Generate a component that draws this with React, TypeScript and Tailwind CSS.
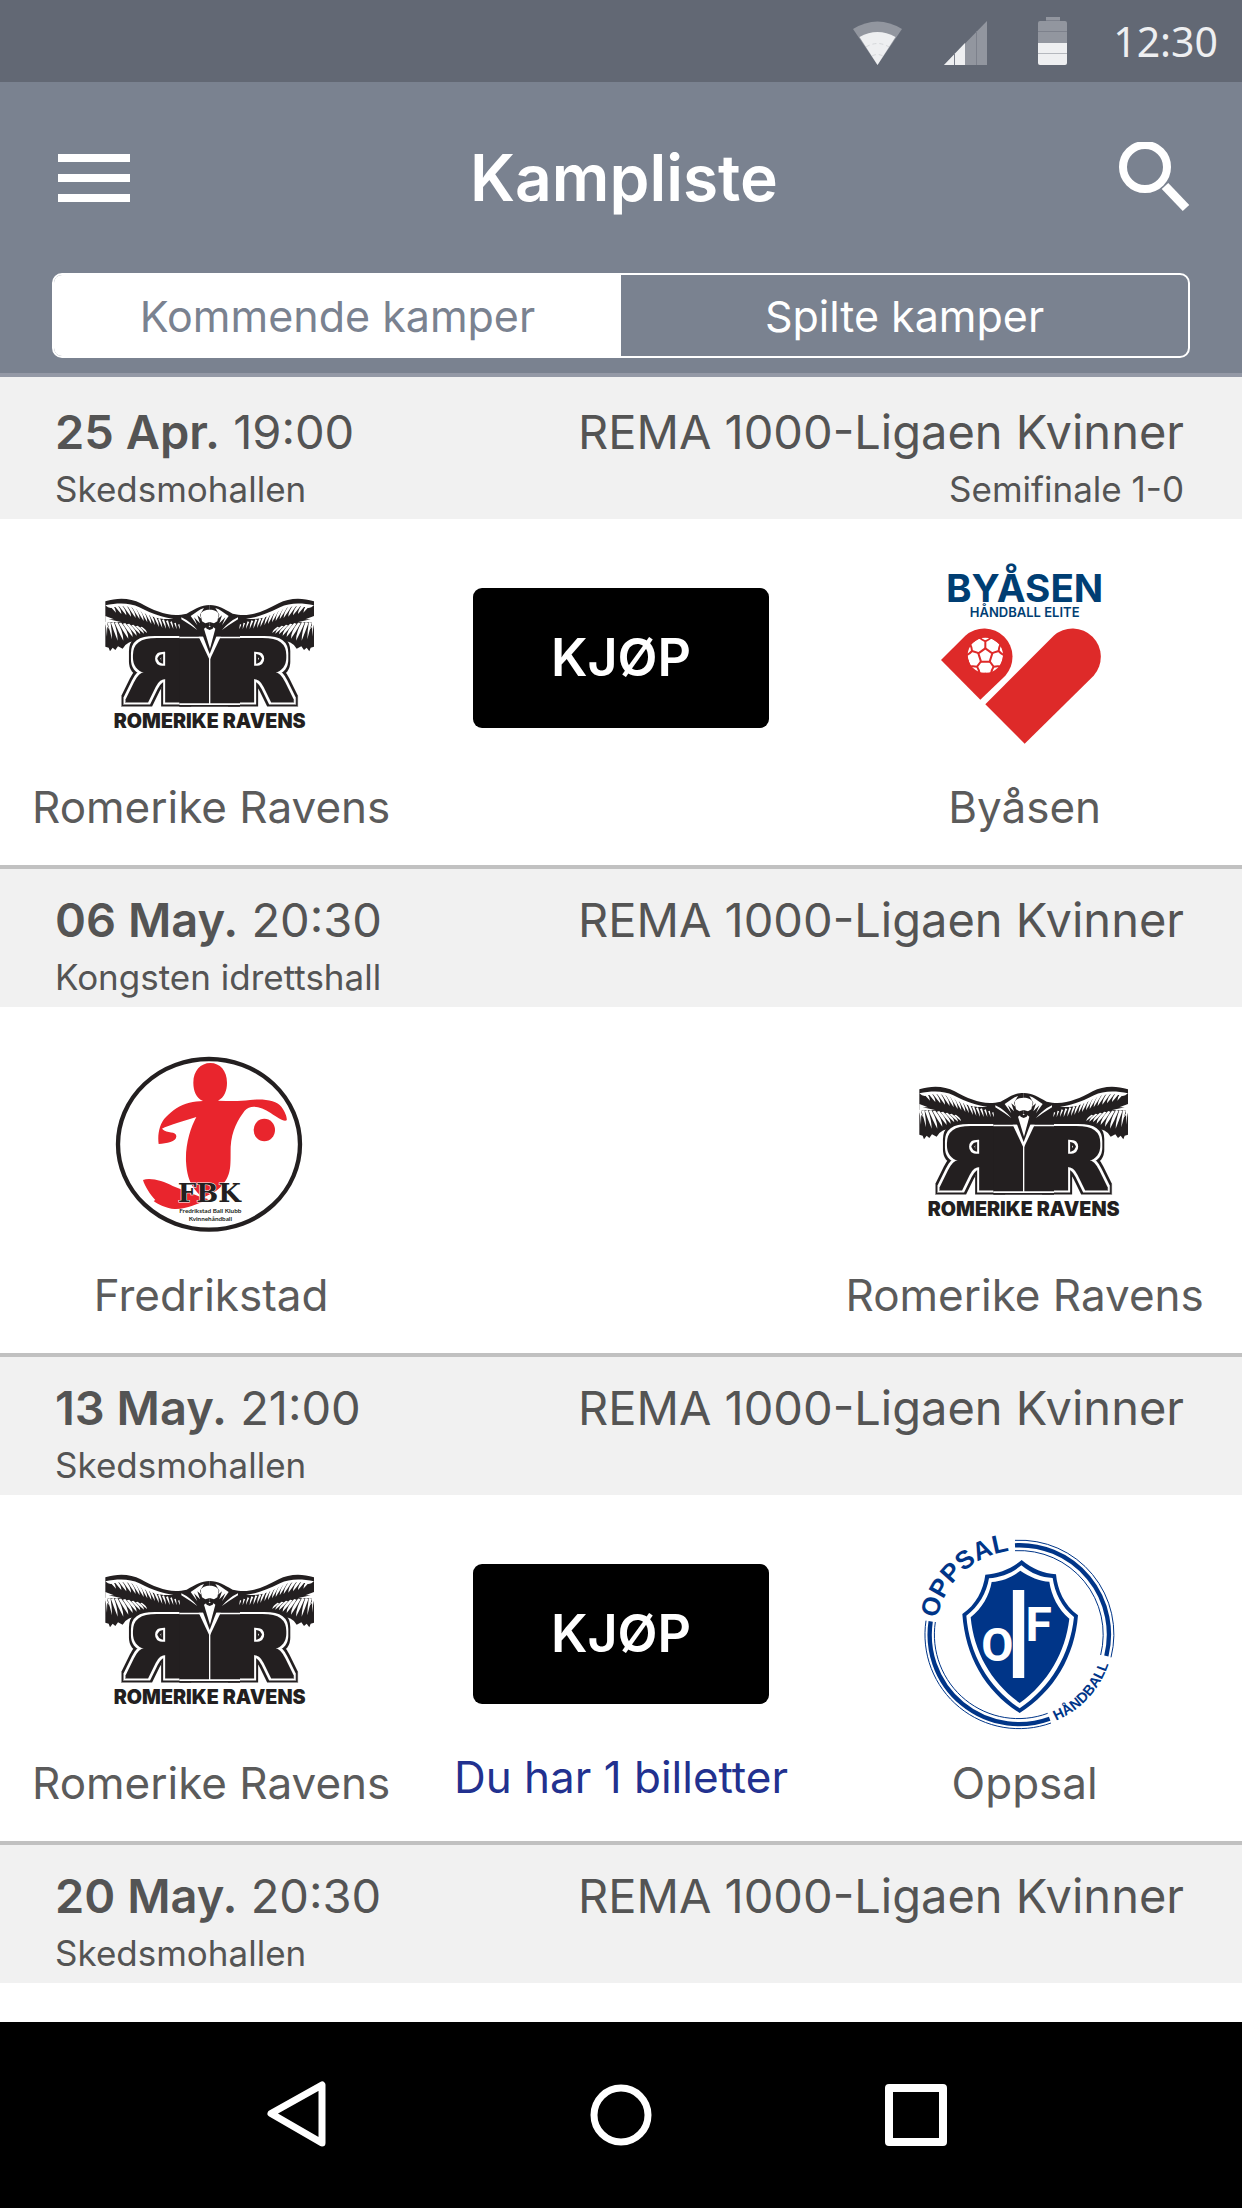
import { useState } from 'react';

const ink = '#231f20';

const matches: Match[] = [
  { date: '25 Apr.', time: '19:00', venue: 'Skedsmohallen', league: 'REMA 1000-Ligaen Kvinner', round: 'Semifinale 1-0', home: 'Romerike Ravens', away: 'Byåsen', buy: true },
  { date: '06 May.', time: '20:30', venue: 'Kongsten idrettshall', league: 'REMA 1000-Ligaen Kvinner', home: 'Fredrikstad', away: 'Romerike Ravens' },
  { date: '13 May.', time: '21:00', venue: 'Skedsmohallen', league: 'REMA 1000-Ligaen Kvinner', home: 'Romerike Ravens', away: 'Oppsal', buy: true, tickets: 'Du har 1 billetter' },
  { date: '20 May.', time: '20:30', venue: 'Skedsmohallen', league: 'REMA 1000-Ligaen Kvinner' },
];

// white gaps between the feathers, one wing: x, y, dx, dy, width
const feathers = [
  [49, 126, 2, 44, 8], [57, 128, 9, 50, 9], [67, 128, 16, 54, 9], [78, 128, 22, 54, 8],
  [90, 130, 25, 46, 8], [102, 131, 26, 40, 7], [114, 133, 26, 34, 7], [127, 136, 24, 27, 6],
  [140, 139, 22, 22, 6], [153, 142, 18, 17, 5],
  [66, 80, 12, 18, 9], [78, 78, 16, 24, 9], [91, 78, 18, 28, 9], [104, 78, 19, 32, 9],
  [117, 79, 20, 35, 8], [130, 82, 19, 36, 8], [143, 87, 18, 36, 8], [156, 93, 16, 34, 7],
  [169, 99, 15, 33, 7], [182, 106, 13, 30, 7], [195, 111, 12, 30, 6], [207, 116, 10, 28, 6],
  [219, 120, 9, 26, 6], [231, 123, 8, 24, 6], [243, 126, 7, 21, 5], [255, 130, 5, 18, 5], [266, 134, 4, 14, 4],
];

function RavenWing() {
  return (
    <g>
      <path
        d="M46 64C84 52 122 54 152 70C200 96 240 113 290 101C318 86 332 75 359 75V180H150Q110 182 98 206L84 199L76 210L68 203L60 214L56 203L46 200Z"
        fill={ink}
      />
      <path d="M46 76C84 68 120 68 148 82C190 103 222 114 250 116C212 120 186 112 150 92C116 76 90 76 62 84L54 82Z" fill="white" />
      {feathers.map(([x, y, dx, dy, w]) => (
        <path key={`${x}-${y}`} d={`M${x - w / 2} ${y}L${x + w / 2} ${y - 2}Q${x + dx} ${y + dy / 2} ${x + dx} ${y + dy}Q${x + dx / 3} ${y + dy / 2} ${x - w / 2} ${y}Z`} fill="white" />
      ))}
      <path d="M46 108L72 118L56 118L96 127L62 126L48 128L60 150L46 134Z" fill="white" />
      <path d="M302 108C318 98 328 88 342 84L330 104L334 116L322 106L330 130L312 112L322 136Z" fill="white" />
      <path d="M274 112Q300 124 322 150Q300 134 274 118Z" fill="white" />
    </g>
  );
}

function RavenLetter() {
  return (
    <text x="412" y="366" fontFamily="DejaVu Sans" fontWeight="700" fontSize="256" fill={ink} filter="url(#raven-outline)">R</text>
  );
}

function RavensLogo() {
  return (
    <svg viewBox="3 -78 720 600" className="h-[200px] w-[240px]" role="img" aria-label="Romerike Ravens">
      <defs>
        <filter id="raven-outline" x="-20%" y="-20%" width="140%" height="140%" colorInterpolationFilters="sRGB">
          <feMorphology in="SourceGraphic" operator="dilate" radius="10 4" result="body" />
          <feMorphology in="SourceAlpha" operator="dilate" radius="15 9" result="gapArea" />
          <feFlood floodColor="white" />
          <feComposite in2="gapArea" operator="in" result="gap" />
          <feMorphology in="SourceGraphic" operator="dilate" radius="20 14" result="edge" />
          <feMerge>
            <feMergeNode in="edge" />
            <feMergeNode in="gap" />
            <feMergeNode in="body" />
          </feMerge>
        </filter>
      </defs>
      <RavenWing />
      <g transform="translate(718 0) scale(-1 1)">
        <RavenWing />
        <RavenLetter />
      </g>
      <RavenLetter />
      <path d="M268 166H450V380H268Z" fill={ink} />
      <path d="M268 170H450V175H268ZM268 370H450V375H268Z" fill="white" />
      <path d="M357 200H361V372H357Z" fill="white" />
      <path d="M332 104C334 84 384 84 386 104L382 124L372 130L359 126L346 130L336 124Z" fill="white" />
      <path d="M326 170L359 240L392 170Z" fill="white" />
      <path d="M334 156L359 222L384 156Z" fill={ink} />
      <path d="M342 146L354 138H366L376 146L360 206Z" fill="white" />
      <path d="M352 134L359 142L366 134L376 130L368 146L359 150L350 146L342 130Z" fill={ink} />
      <text x="359" y="445" textAnchor="middle" fontFamily="Inter" fontWeight="900" fontSize="59" fill={ink}>ROMERIKE RAVENS</text>
    </svg>
  );
}

function ByasenLogo() {
  return (
    <svg viewBox="15 42 720 600" className="h-[200px] w-[240px]" role="img" aria-label="Byåsen">
      <text x="374" y="185" textAnchor="middle" fontFamily="Inter" fontWeight="700" fontSize="116" fill="#003e73">BYÅSEN</text>
      <text x="374" y="232" textAnchor="middle" fontFamily="Inter" fontWeight="600" fontSize="39" fill="#003e73">HÅNDBALL ELITE</text>
      <path d="M123 360L196 287A85 85 0 0 1 316 407L241 479Z" fill="#de2a29" />
      <path d="M256 493L461 287A85 85 0 0 1 581 407L374 611Z" fill="#de2a29" />
      <circle cx="256" cy="346" r="53" fill="white" />
      <g fill="none" stroke="#de2a29" strokeWidth="6">
        <path d="M256 325L277 340L269 365H243L235 340Z" />
        {[0, 72, 144, 216, 288].map((angle) => (
          <path key={angle} d="M256 325V304M238 292Q246 300 256 304Q266 300 274 292M238 292L222 302M274 292L290 302" transform={`rotate(${angle} 256 346)`} />
        ))}
      </g>
    </svg>
  );
}

function FredrikstadLogo() {
  return (
    <svg viewBox="-27 6 720 600" className="h-[200px] w-[240px]" role="img" aria-label="Fredrikstad">
      <ellipse cx="327" cy="313" rx="273" ry="256" fill="white" stroke={ink} strokeWidth="13" />
      <g fill="#e9252d">
        <path d="M309 183C288 174 280 152 280 128C280 92 302 69 331 69C360 69 381 92 381 128C381 152 373 172 354 182C390 183 420 184 450 180C492 175 530 182 544 200C556 216 562 234 560 241C552 247 532 232 512 219C484 200 452 192 434 212C414 238 395 272 392 320C391 370 396 400 370 432C345 462 316 468 306 474C290 450 262 440 258 364C256 312 272 262 289 231C252 242 206 256 186 266C202 282 228 272 229 288C230 306 200 310 176 312C172 286 178 250 198 231C216 212 240 194 268 188C282 184 296 184 309 183Z" />
        <ellipse cx="493" cy="270" rx="32" ry="34" />
        <path d="M129 420C150 412 190 422 218 438L300 470L326 478C290 492 262 508 224 507C200 506 172 492 161 483L166 480C152 466 134 438 129 420Z" />
      </g>
      <text x="328" y="485" textAnchor="middle" fontFamily="DejaVu Serif" fontWeight="700" fontSize="78" fill={ink} stroke="white" strokeWidth="3" paintOrder="stroke">FBK</text>
      <text x="331" y="519" textAnchor="middle" fontFamily="Lato" fontWeight="700" fontSize="19" fill={ink}>Fredrikstad Ball Klubb</text>
      <text x="331" y="542" textAnchor="middle" fontFamily="Lato" fontWeight="700" fontSize="19" fill={ink}>Kvinnehåndball</text>
    </svg>
  );
}

function OppsalLogo() {
  return (
    <svg viewBox="15 30 720 600" className="h-[200px] w-[240px]" role="img" aria-label="Oppsal">
      <defs>
        <path id="oppsal-top" d="M112 296A251 251 0 0 1 420 99" />
        <path id="oppsal-bottom" d="M468 602A281 281 0 0 0 640 343" />
      </defs>
      <g fill="none" stroke="#003588">
        <path d="M345 61A282 282 0 0 1 633 412" strokeWidth="3" />
        <path d="M345 76A268 268 0 0 1 619 408" strokeWidth="13" />
        <path d="M345 92A252 252 0 0 1 602 405" strokeWidth="3" />
        <path d="M453 609A282 282 0 0 1 78 302" strokeWidth="3" />
        <path d="M449 596A268 268 0 0 1 92 304" strokeWidth="13" />
        <path d="M443 580A252 252 0 0 1 106 306" strokeWidth="3" />
      </g>
      <path d="M365 120C398 148 430 160 468 163C472 208 492 256 534 286C524 410 462 514 359 579C256 514 196 410 187 282C228 254 250 210 256 164C296 160 332 148 365 120Z" fill="#003588" />
      <path d="M364 136C396 162 424 172 458 174C464 216 484 262 522 291C510 404 452 502 359 565C266 502 208 404 199 287C236 260 260 218 267 175C302 172 336 160 364 136Z" fill="white" />
      <path d="M361 152C388 170 420 184 448 185C454 226 474 268 508 296C496 398 444 488 359 549C274 488 222 398 212 292C246 266 268 226 275 186C306 184 336 172 361 152Z" fill="#003588" />
      <g fill="white" fontFamily="Roboto" fontWeight="700" textAnchor="middle">
        <text x="292" y="424" fontSize="140">O</text>
        <text x="356" y="474" fontFamily="Inter" fontWeight="400" fontSize="364">I</text>
        <text x="416" y="364" fontSize="144">F</text>
      </g>
      <g fill="#003588" fontFamily="'Liberation Sans'" fontWeight="700">
        <text fontSize="77"><textPath href="#oppsal-top">OPPSAL</textPath></text>
        <text fontSize="43"><textPath href="#oppsal-bottom">HÅNDBALL</textPath></text>
      </g>
    </svg>
  );
}

function TeamLogo({ name }: { name: string }) {
  if (name === 'Byåsen') return <ByasenLogo />;
  if (name === 'Fredrikstad') return <FredrikstadLogo />;
  if (name === 'Oppsal') return <OppsalLogo />;
  return <RavensLogo />;
}

function Team({ name }: { name: string }) {
  return (
    <div className="flex flex-col items-center pt-[35px] pb-7">
      <TeamLogo name={name} />
      <p className="mt-[23px] text-[44px] leading-[60px] whitespace-nowrap text-[#5b5b5b]">{name}</p>
    </div>
  );
}

function MatchItem({ match }: { match: Match }) {
  return (
    <li className="group">
      <div className="flex justify-between border-t-4 border-[#c1c1c1] bg-[#f1f1f1] pt-[21px] pr-[58px] pb-[2px] pl-[55px] text-[#545454] group-first:border-[#f1f1f1]">
        <div>
          <p className="text-[47px] leading-[60px]">
            <b className="font-semibold">{match.date}</b> {match.time}
          </p>
          <p className="text-[35px] leading-[55px]">{match.venue}</p>
        </div>
        <div className="text-right">
          <p className="text-[47px] leading-[60px]">{match.league}</p>
          {match.round && <p className="text-[35px] leading-[55px]">{match.round}</p>}
        </div>
      </div>
      {match.home && match.away && (
        <div className="grid grid-cols-[34%_32%_33%]">
          <Team name={match.home} />
          <div className="flex flex-col items-center pt-[69px]">
            {match.buy && (
              <button className="h-[140px] w-[296px] rounded-[9px] bg-black text-[52px] font-semibold text-white">KJØP</button>
            )}
            {match.tickets && (
              <a href="#billetter" className="mt-[43px] text-[44px] leading-[60px] whitespace-nowrap text-[#22318f]">{match.tickets}</a>
            )}
          </div>
          <Team name={match.away} />
        </div>
      )}
    </li>
  );
}

function StatusBar() {
  return (
    <div className="flex h-[82px] items-center justify-end bg-[#626874] pr-6 text-[#eeeff1]">
      <svg viewBox="0 0 49 48" className="mr-[42px] h-12 w-[49px]">
        <path d="M0 12Q24.500 -3 49 12L24.500 48Z" fill="#92969f" />
        <path d="M6.500 20Q24.500 10 42.500 20L24.500 48Z" fill="#eeeff1" />
        <path d="M13 30Q24.500 23 36 30M19 39Q24.500 36 30 39" fill="none" stroke="#d5d7da" strokeDasharray="4 3" />
      </svg>
      <svg viewBox="0 0 43 48" className="mr-[51px] h-12 w-[43px]">
        <path d="M43 4V48H0Z" fill="#92969f" />
        <path d="M21 26V48H0Z" fill="#eeeff1" />
        <path d="M10.500 36V48M32.500 14V48" stroke="#7d818c" />
      </svg>
      <svg viewBox="0 0 29 48" className="mr-[46px] h-12 w-[29px]">
        <path d="M8 0H22V4H27Q29 4 29 6V26H0V6Q0 4 2 4H8Z" fill="#92969f" />
        <path d="M0 26H29V46Q29 48 27 48H2Q0 48 0 46Z" fill="#eeeff1" />
        <path d="M0 14.500H29M8 3.500H22" stroke="#7d818c" />
        <path d="M0 36.500H29" stroke="#b5b8be" />
      </svg>
      <span className="font-['Noto_Sans'] text-[41px] leading-[60px]">12:30</span>
    </div>
  );
}

export default function App() {
  const [tab, setTab] = useState('Kommende kamper');

  return (
    <div className="flex min-h-screen flex-col bg-white font-['Inter',sans-serif]">
      <StatusBar />
      <header className="border-b-4 border-[#9499a6] bg-[#7a8290] px-[52px] pb-[15px] text-white">
        <div className="grid h-[191px] grid-cols-[72px_1fr_72px] items-center pl-[6px]">
          <button aria-label="Meny" className="flex flex-col gap-3">
            <span className="h-2 w-full bg-white" />
            <span className="h-2 w-full bg-white" />
            <span className="h-2 w-full bg-white" />
          </button>
          <h1 className="text-center text-[64px] leading-[80px] font-semibold">Kampliste</h1>
          <button aria-label="Søk">
            <svg viewBox="0 0 72 72" className="h-[72px] w-[72px]" fill="none" stroke="white">
              <circle cx="27" cy="25" r="22" strokeWidth="8" />
              <path d="M47 44L68 66" strokeWidth="9" />
            </svg>
          </button>
        </div>
        <div role="tablist" className="grid h-[85px] grid-cols-2 overflow-hidden rounded-[10px] border-2 border-white">
          {['Kommende kamper', 'Spilte kamper'].map((name) => (
            <button
              key={name}
              role="tab"
              aria-selected={tab === name}
              onClick={() => setTab(name)}
              className="text-[43px] leading-[60px] aria-selected:bg-white aria-selected:text-[#7a8290]"
            >
              {name}
            </button>
          ))}
        </div>
      </header>
      <main className="flex-1">
        <ul>
          {matches.map((match) => (
            <MatchItem key={match.date} match={match} />
          ))}
        </ul>
      </main>
      <nav className="flex h-[186px] items-center bg-black pl-[21%]">
        <button aria-label="Tilbake" className="mr-[252px]">
          <svg viewBox="0 0 72 72" className="h-[72px] w-[72px]" fill="none" stroke="white" strokeWidth="7" strokeLinejoin="round">
            <path d="M61 6V64L10 34.500Z" />
          </svg>
        </button>
        <button aria-label="Hjem" className="mr-[223px]">
          <svg viewBox="0 0 72 72" className="h-[72px] w-[72px]" fill="none" stroke="white" strokeWidth="7">
            <circle cx="36" cy="36" r="27" />
          </svg>
        </button>
        <button aria-label="Oversikt">
          <svg viewBox="0 0 72 72" className="h-[72px] w-[72px]" fill="none" stroke="white" strokeWidth="8" strokeLinejoin="round">
            <rect x="9" y="9" width="54" height="54" />
          </svg>
        </button>
      </nav>
    </div>
  );
}

interface Match {
  date: string;
  time: string;
  venue: string;
  league: string;
  round?: string;
  home?: string;
  away?: string;
  buy?: boolean;
  tickets?: string;
}
